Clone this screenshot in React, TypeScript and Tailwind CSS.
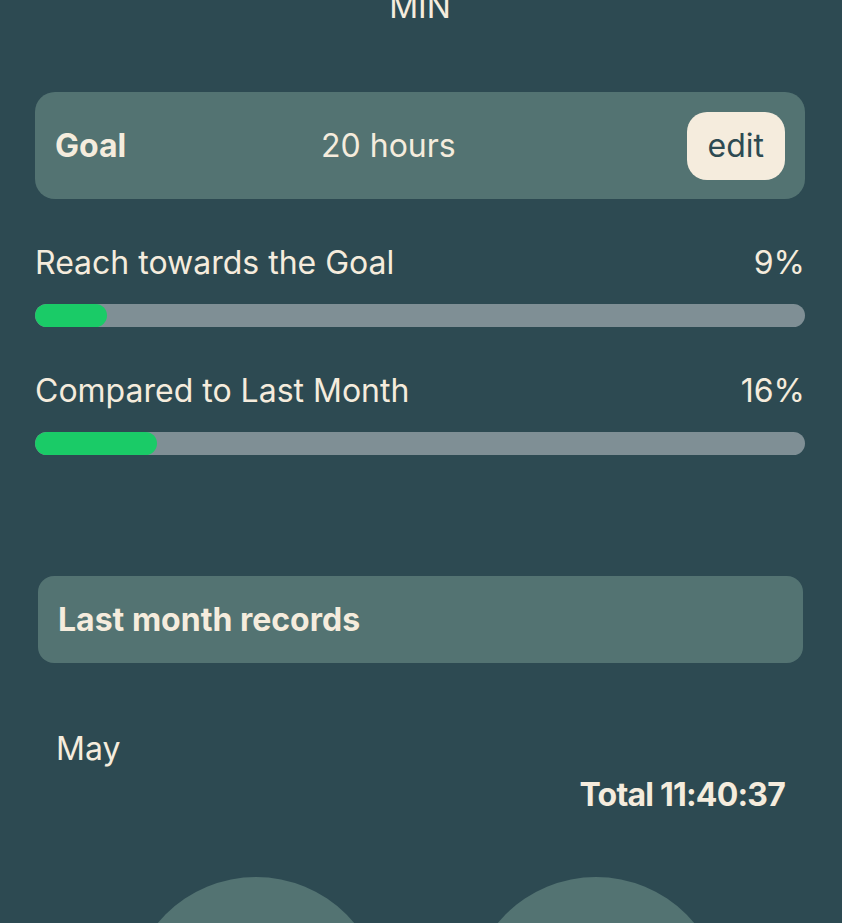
export default function App() {
  return (
    <div
      className="min-h-screen w-full overflow-hidden bg-[#2d4a52] text-[#f5ecdd]"
      style={{ fontFamily: 'Inter, "Noto Sans", sans-serif' }}
    >
      <div className="flex flex-col pl-[35px] pr-[37px]">
        <p className="-mt-[17px] text-center text-[32px] leading-[48px]">MIN</p>

        <div className="mt-[61px] flex h-[107px] items-center rounded-[20px] bg-[#537372] px-5">
          <span className="w-[71px] text-[32px] font-bold">Goal</span>
          <span className="ml-[195px] text-[32px]">20 hours</span>
          <button className="ml-auto h-[68px] rounded-[20px] bg-[#f5ecdd] px-[21px] text-[32px] text-[#2d4a52]">
            edit
          </button>
        </div>

        <div className="mt-10 flex items-center justify-between text-[32px] leading-[48px]">
          <span>Reach towards the Goal</span>
          <span>9%</span>
        </div>
        <div className="mt-[17px] h-[23px] w-full overflow-hidden rounded-full bg-[#7f8f95]">
          <div className="h-full rounded-full bg-[#1acb67]" style={{ width: '9.4%' }} />
        </div>

        <div className="mt-10 flex items-center justify-between text-[32px] leading-[48px]">
          <span>Compared to Last Month</span>
          <span>16%</span>
        </div>
        <div className="mt-[17px] h-[23px] w-full overflow-hidden rounded-full bg-[#7f8f95]">
          <div className="h-full rounded-full bg-[#1acb67]" style={{ width: '15.9%' }} />
        </div>

        <div className="ml-[3px] mr-[2px] mt-[121px] flex h-[87px] items-center rounded-[16px] bg-[#537372] px-5">
          <span className="text-[32px] font-bold">Last month records</span>
        </div>

        <div className="mt-[66px] flex flex-col pl-[21px] pr-5">
          <span className="text-[32px] leading-[40px]">May</span>
          <span className="mt-1.5 self-end text-[32px] font-bold leading-[40px] tracking-[-0.8px]">
            Total 11:40:37
          </span>
        </div>

        <div className="mt-[62px] flex justify-center gap-[84px] pl-[12px]">
          <div className="h-64 w-64 shrink-0 rounded-full bg-[#537372]" />
          <div className="h-64 w-64 shrink-0 rounded-full bg-[#537372]" />
        </div>
      </div>
    </div>
  )
}
